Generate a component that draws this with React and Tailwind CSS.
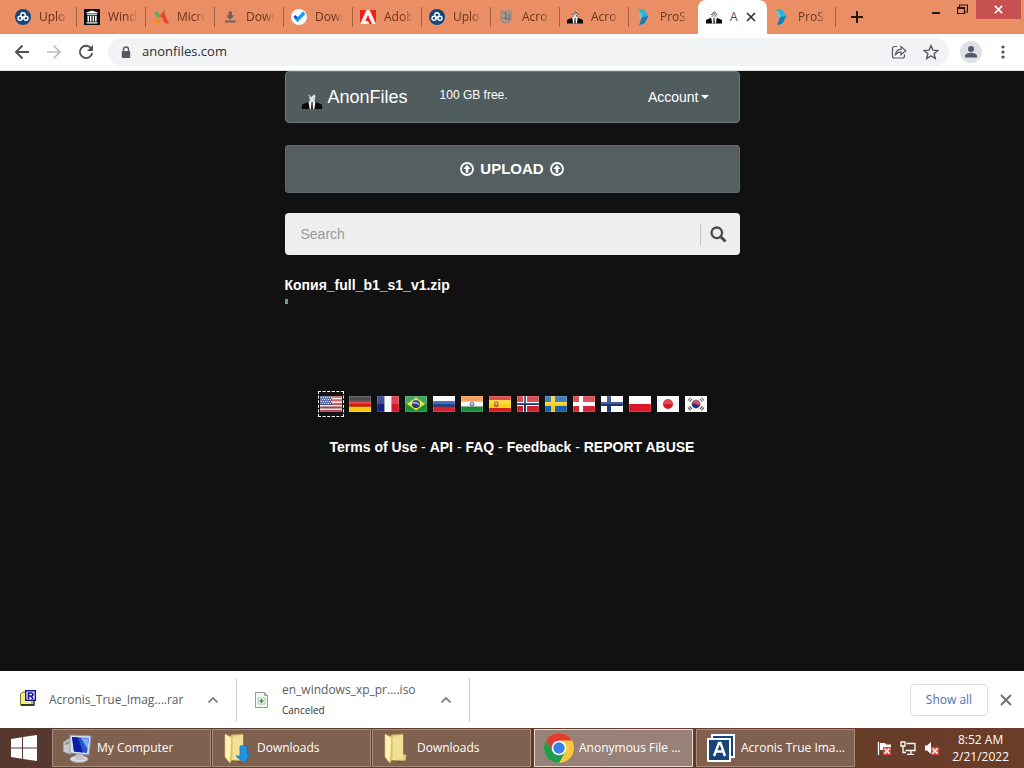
import React from "react";

const UI = "font-['Open_Sans','Noto_Sans',sans-serif]";
const ARIAL = "font-['Liberation_Sans',Arial,sans-serif]";

/* ---------- favicons ---------- */

function SuitIcon({ className = "size-4", light = false }) {
  return (
    <svg viewBox="0 0 20 16" className={className} aria-hidden="true">
      <path d="M0 16v-4.2L6.2 9 10 12l3.6-3 6.4 2.800V16z" fill="#080808" />
      <path d="M6.600 9 8.200 7.400h3.600L13.400 9 12.400 16H7.600z" fill="#f4f6f6" />
      <path d="M9.500 8.500h1.100l.5 7.500H8.900z" fill="#2a2a2a" />
      {light ? (
        <>
          <path d="m7 3.500 2 .8 3-3 1.500 2-.6 3.500-1.700 1.600H9.200L7.600 6.600z" fill="#cdd6d6" />
          <path d="m6.600 1.800 2 2M9 5.600l4-3.200M8.600 7.500l3.800-.4" fill="none" stroke="#fff" />
          <path d="m9.500 3.500 1.200-1.600" stroke="#667172" />
        </>
      ) : (
        <>
          <path d="m7 5 3-3.200L13.300 5l-.8 2.500-1.700 1H9.200L7.600 7.500z" fill="#ece2da" />
          <path d="M6.200 5.200 8 4.400l2.500-3L13 4.200l1 1.200M7.500 7.600l1-1.600m4 1.600-.6-2M9.500 4.800l1.800-.8" fill="none" stroke="#262626" />
        </>
      )}
    </svg>
  );
}

function CloudIcon() {
  return (
    <svg viewBox="0 0 16 16" className="size-4" aria-hidden="true">
      <circle cx="8" cy="8" r="8" fill="#15467c" />
      <g fill="none" stroke="#fff" strokeWidth="1.400">
        <circle cx="8" cy="6" r="2.200" />
        <circle cx="5" cy="9.300" r="2" />
        <circle cx="11" cy="9.300" r="2" />
        <path d="m6.700 10.300 2.800-2.700" />
      </g>
    </svg>
  );
}

function ArchiveIcon() {
  return (
    <svg viewBox="0 0 16 16" className="size-4" aria-hidden="true">
      <path d="M0 0h16v16H0z" fill="#080808" />
      <path d="m8 1.5 5.5 2v1H2.5v-1zM3 5.3h10v1H3zM3.5 7h1.6v5.5H3.5zm2.5 0h1.5v5.5H6zm2.6 0h1.5v5.5H8.600zm2.400 0h1.600v5.500H11zM2.500 13.200h11v1.200h-11z" fill="#fff" />
    </svg>
  );
}

function TriangleIcon() {
  return (
    <svg viewBox="0 0 16 16" className="size-4" aria-hidden="true">
      <path d="M1 3.500 4 2l4 5-3 3z" fill="#5fae57" />
      <path d="M5 9 11 1l2 2-5 7z" fill="#9a9a52" />
      <path d="M0 14 3 9l6 3-3 2z" fill="#f08a24" />
      <path d="m7 7 4-5 2 6 3 7-4-1z" fill="#f0452c" />
      <path d="m5 9 3-1 2 2-2 2z" fill="#ea8f65" />
    </svg>
  );
}

function DownloadIcon() {
  return (
    <svg viewBox="0 0 16 16" className="size-4" aria-hidden="true">
      <path d="M6.500 2.500h3.400v4h2.600L8.200 10.800 4 6.500h2.500zM3 11.500h10.500V13.500H3z" fill="#686461" />
    </svg>
  );
}

function CheckIcon() {
  return (
    <svg viewBox="0 0 16 16" className="size-4" aria-hidden="true">
      <circle cx="8" cy="8" r="8" fill="#f4faff" />
      <path d="m2.500 8 2-2 4 4-2.200 2.500z" fill="#1545d0" />
      <path d="m5.500 9.500 6.500-7 2.500 2.500-8 8-2-2z" fill="#169be9" />
    </svg>
  );
}

function AdobeIcon() {
  return (
    <svg viewBox="0 0 16 16" className="size-4" aria-hidden="true">
      <path d="M0 1h16v14H0z" fill="#fff2eb" />
      <path d="M0 1h6.300L0 15zm9.700 0H16v14zM8 6l4 9H9.300l-1.200-3H5.300z" fill="#ee2019" />
    </svg>
  );
}

function ShieldIcon() {
  return (
    <svg viewBox="0 0 16 16" className="size-4" aria-hidden="true">
      <path d="M3 2h10v8.500L9.500 14H6l-3-3z" fill="#b59a88" stroke="#918983" strokeWidth="1.200" />
      <path d="M5 4h3v5H5m6-5v6H7" fill="none" stroke="#6a757c" strokeWidth="1.300" />
    </svg>
  );
}

function ArrowTabIcon() {
  return (
    <svg viewBox="0 0 16 16" className="size-4" aria-hidden="true">
      <path d="M2 0h4q2 0 3 2l3.500 5L9 9 6 7z" fill="#2bb3dc" />
      <path d="M12.500 7 9 13.500Q8 15 6 15.500L3 16l3-8z" fill="#1280b8" />
      <path d="m2 0 5 7-2 3z" fill="#58c8e2" />
    </svg>
  );
}

const TABS = [
  { title: "Uplo", icon: <CloudIcon /> },
  { title: "Wind", icon: <ArchiveIcon /> },
  { title: "Micro", icon: <TriangleIcon /> },
  { title: "Down", icon: <DownloadIcon /> },
  { title: "Down", icon: <CheckIcon /> },
  { title: "Adob", icon: <AdobeIcon /> },
  { title: "Uplo", icon: <CloudIcon /> },
  { title: "Acro", icon: <ShieldIcon /> },
  { title: "Acro", icon: <SuitIcon /> },
  { title: "ProS", icon: <ArrowTabIcon />, noLine: true },
  { title: "A", icon: <SuitIcon />, active: true },
  { title: "ProS", icon: <ArrowTabIcon /> },
];

function Tab({ tab }) {
  if (tab.active) {
    return (
      <div className="flex h-full w-[69px] shrink-0 items-center rounded-t-lg bg-white pl-2">
        <button className="flex items-center gap-2 text-[#45494d]">
          {tab.icon}
          <span className="w-4 text-left">{tab.title}</span>
        </button>
        <button aria-label="Close tab">
          <svg viewBox="0 0 10 10" className="size-[10px]">
            <path d="m1 1 8 8m0-8L1 9" stroke="#333" strokeWidth="1.700" />
          </svg>
        </button>
      </div>
    );
  }
  return (
    <button className="flex h-full w-[69px] shrink-0 items-center pl-[7px] text-[#6b321a]">
      {tab.icon}
      <span className="ml-2 min-w-0 flex-1 overflow-hidden whitespace-nowrap text-left [mask-image:linear-gradient(to_right,#000_65%,transparent)]">
        {tab.title}
      </span>
      <span className={tab.noLine ? "ml-2 w-px" : "ml-2 h-5 w-px bg-[#a5603f]"} />
    </button>
  );
}

function TabStrip() {
  return (
    <div className="flex h-[34px] items-start bg-[#ea8f65] text-xs">
      <div className="flex h-full min-w-0 items-center pl-2">
        {TABS.map((t, i) => (
          <Tab key={i} tab={t} />
        ))}
        <button aria-label="New tab" className="ml-[14px]">
          <svg viewBox="0 0 14 14" className="size-[14px]">
            <path d="M7 1v12M1 7h12" stroke="#28180f" strokeWidth="2" />
          </svg>
        </button>
      </div>
      <div className="ml-auto flex h-[19px] shrink-0 items-center pr-[3px]">
        <button aria-label="Minimize" className="flex w-6 justify-center">
          <svg viewBox="0 0 10 10" className="size-[10px]">
            <path d="M1 8h8" stroke="#27160e" strokeWidth="2" />
          </svg>
        </button>
        <button aria-label="Restore" className="flex w-7 justify-center">
          <svg viewBox="0 0 11 11" className="size-[11px]" fill="none" stroke="#27160e">
            <path d="M.5 3.500h7v6h-7zM.5 4.500h7M2.500 3V1h8v7H8" strokeWidth="1.200" />
          </svg>
        </button>
        <button aria-label="Close" className="flex h-[19px] w-[45px] items-center justify-center bg-[#c75050]">
          <svg viewBox="0 0 10 10" className="size-[9px]">
            <path d="m1 1 8 8m0-8L1 9" stroke="#fff" strokeWidth="1.800" />
          </svg>
        </button>
      </div>
    </div>
  );
}

function Toolbar() {
  return (
    <div className="flex h-[37px] items-center border-b border-[#d9dfe2] bg-white pl-[14px] pr-3">
      <button aria-label="Back">
        <svg viewBox="0 0 16 16" className="size-4" fill="none" stroke="#4e5256" strokeWidth="1.900">
          <path d="M15 8H2m6.500-6.500L2 8l6.500 6.500" />
        </svg>
      </button>
      <button aria-label="Forward" className="ml-4">
        <svg viewBox="0 0 16 16" className="size-4" fill="none" stroke="#b9bbbd" strokeWidth="1.700">
          <path d="M1 8h13M7.500 1.500 14 8l-6.500 6.500" />
        </svg>
      </button>
      <button aria-label="Reload" className="ml-4">
        <svg viewBox="0 0 16 16" className="size-4" fill="none" stroke="#4e5256" strokeWidth="1.900">
          <path d="M13.300 4.500A6.200 6.200 0 1 0 14.200 9" />
          <path d="M15 1v6H9z" fill="#4e5256" stroke="none" />
        </svg>
      </button>
      <div className="ml-[14px] flex h-7 min-w-0 flex-1 items-center rounded-full bg-[#f1f3f4] pl-[13px] pr-[10px]">
        <svg viewBox="0 0 10 14" className="h-[13px] w-[10px] shrink-0" aria-hidden="true">
          <path d="M2.300 6V3.800a2.700 2.700 0 0 1 5.400 0V6" fill="none" stroke="#55585c" strokeWidth="1.400" />
          <rect x=".5" y="5.300" width="9" height="7.700" rx="1" fill="#55585c" />
        </svg>
        <input
          aria-label="Address"
          defaultValue="anonfiles.com"
          className="ml-[11px] min-w-0 flex-1 bg-transparent text-[13px] text-[#2c2f33] outline-none"
        />
        <button aria-label="Share">
          <svg viewBox="0 0 16 16" className="size-4" fill="none" stroke="#55595d" strokeWidth="1.200">
            <path d="M6 2.500H3.500a2 2 0 0 0-2 2v7.500a2 2 0 0 0 2 2h8a2 2 0 0 0 2-2v-1.500" />
            <path d="M4.500 10.500c.4-4 2.500-5.200 5.500-5.200V2.500l4.800 4.200L10 10.800V8.200c-2.500 0-4 .7-5.500 2.300z" />
          </svg>
        </button>
        <button aria-label="Bookmark" className="ml-4">
          <svg viewBox="0 0 16 16" className="size-4" fill="none" stroke="#55595d" strokeWidth="1.400">
            <path d="m8 1.500 1.900 4.600 5 .4-3.800 3.200 1.200 4.800L8 11.900l-4.300 2.600 1.200-4.800L1.100 6.500l5-.4z" />
          </svg>
        </button>
      </div>
      <button aria-label="Profile" className="ml-[11px] flex size-[22px] items-center justify-center rounded-full bg-[#dee1e6]">
        <svg viewBox="0 0 14 14" className="size-[14px]" fill="#515a68">
          <circle cx="7" cy="4" r="3" />
          <path d="M1 12.500V11c0-2.200 4-3.200 6-3.200s6 1 6 3.200v1.500z" />
        </svg>
      </button>
      <button aria-label="Menu" className="ml-3 flex w-[18px] justify-center">
        <svg viewBox="0 0 4 14" className="h-[14px] w-1" fill="#4a4e52">
          <circle cx="2" cy="2" r="1.600" />
          <circle cx="2" cy="7" r="1.600" />
          <circle cx="2" cy="12" r="1.600" />
        </svg>
      </button>
    </div>
  );
}

/* ---------- page ---------- */

function UploadGlyph() {
  return (
    <svg viewBox="0 0 14 14" className="size-[14px]" aria-hidden="true">
      <circle cx="7" cy="7" r="6" fill="none" stroke="#fff" strokeWidth="1.800" />
      <path d="m7 2.800 3.700 4.200H8.300v3.700H5.700V7H3.300z" fill="#fff" />
    </svg>
  );
}

function Cross({ bg, cross, inner }) {
  return (
    <>
      <path d="M0 0h22v16H0z" fill={bg} />
      <path d="M6 0h4v6h12v4H10v6H6v-6H0V6h6z" fill={cross} />
      {inner && <path d="M7 0h2v7h13v2H9v7H7V9H0V7h7z" fill={inner} />}
    </>
  );
}

function HStripes({ colors }) {
  return colors.map((c, i) => (
    <rect key={i} x="0" y={(16 / colors.length) * i} width="22" height={16 / colors.length + 0.1} fill={c} />
  ));
}

const FLAGS = [
  ["English", <>
    <HStripes colors={["#c8393f", "#f3eeee", "#c8393f", "#f3eeee", "#c8393f", "#f3eeee", "#c8393f", "#f3eeee", "#c8393f"]} />
    <path d="M0 0h12v9H0z" fill="#38478d" />
    <path d="M1 1.500h11M2 3.500h10M1 5.500h11M2 7.500h10" stroke="#d5d9ea" strokeWidth="1" strokeDasharray="1 1" />
  </>],
  ["Deutsch", <HStripes colors={["#232323", "#d51418", "#f7c90a"]} />],
  ["Français", <>
    <path d="M0 0h7.400v16H0z" fill="#14217f" />
    <path d="M7.400 0h7.300v16H7.400z" fill="#f6f6f6" />
    <path d="M14.700 0H22v16h-7.300z" fill="#d3182c" />
  </>],
  ["Português", <>
    <path d="M0 0h22v16H0z" fill="#16903b" />
    <path d="m11 1.500 9 6.500-9 6.500L2 8z" fill="#f2dc24" />
    <circle cx="11" cy="8" r="4" fill="#173a7e" />
    <path d="M7.400 7c2.600-.5 5.200.3 7 2.200" stroke="#dfe9ee" fill="none" />
  </>],
  ["Русский", <HStripes colors={["#f8f8f8", "#1746a0", "#d2222c"]} />],
  ["हिन्दी", <>
    <HStripes colors={["#ef8c35", "#f8f8f8", "#198a3c"]} />
    <circle cx="11" cy="8" r="2" fill="#a9bcd6" stroke="#5273a2" />
  </>],
  ["Español", <>
    <path d="M0 0h22v16H0z" fill="#d3201f" />
    <path d="M0 4h22v8H0z" fill="#f7cf1a" />
    <path d="M5 5.500h4.500V10l-2.200 1.500L5 10z" fill="#b66a25" />
    <path d="M6.500 7h1.500v2H6.500z" fill="#dfb2a0" />
  </>],
  ["Norsk", <Cross bg="#d0202e" cross="#fff" inner="#19336f" />],
  ["Svenska", <Cross bg="#1560a8" cross="#f8cc1b" />],
  ["Dansk", <Cross bg="#d42536" cross="#fff" />],
  ["Suomi", <Cross bg="#fafafa" cross="#1d3579" />],
  ["Polski", <HStripes colors={["#fafafa", "#dc1728"]} />],
  ["日本語", <>
    <path d="M0 0h22v16H0z" fill="#fafafa" />
    <circle cx="11" cy="8" r="5" fill="#da1726" />
  </>],
  ["한국어", <>
    <path d="M0 0h22v16H0z" fill="#fafafa" />
    <circle cx="11" cy="8" r="4.300" fill="#193b83" />
    <path d="M6.900 7A4.300 4.300 0 0 1 15.200 9c-1.500 1.400-3.200.8-4.200-.8S8 6 6.900 7z" fill="#d32636" />
    <path d="m3 4.500 2.500-2.800M4.500 5.700 7 3m9.500-1.300L19 4.500M15 3l2.500 2.700M3 11.500l2.500 2.800M4.500 10.300 7 13m9.500 1.300 2.500-2.800M15 13l2.500-2.700" stroke="#3c3c3c" strokeWidth="1.100" />
  </>],
];

function Flag({ name, selected, children }) {
  return (
    <button
      aria-label={name}
      className={
        selected
          ? "-mr-px flex size-[26px] shrink-0 items-center justify-center border border-dashed border-white"
          : "flex h-[26px] w-[22px] shrink-0 items-center justify-center"
      }
    >
      <svg viewBox="0 0 22 16" className="h-4 w-[22px]" aria-hidden="true">
        {children}
        <path d="M0 0h22v8H0z" fill="#fff" opacity=".2" />
        <path d="M.5 .5h21v15H.5z" fill="none" stroke="#fff" opacity=".15" />
      </svg>
    </button>
  );
}

const LINKS = ["Terms of Use", "API", "FAQ", "Feedback", "REPORT ABUSE"];

function Page() {
  return (
    <main className={`${ARIAL} flex-1 bg-[#111111] text-white`}>
      <div className="mx-auto w-full max-w-[455px]">
        <nav className="flex h-[52px] items-center rounded border border-[#6c7778] bg-[#515c5e] pl-4 pr-[30px]">
          <a href="#home" className="flex items-center gap-[6px] text-lg leading-6">
            <SuitIcon light className="mt-2 h-4 w-5" />
            AnonFiles
          </a>
          <span className="mb-1 ml-8 text-xs">100 GB free.</span>
          <button className="ml-auto flex items-center gap-[2px] text-sm">
            Account
            <svg viewBox="0 0 8 4" className="h-1 w-2" aria-hidden="true">
              <path d="M0 0h8L4 4z" fill="#fff" />
            </svg>
          </button>
        </nav>

        <button className="mt-[22px] flex h-12 w-full items-center justify-center gap-[6px] rounded-[3px] border border-[#606c6e] bg-[#555f62] text-[15px] font-bold">
          <UploadGlyph />
          UPLOAD
          <UploadGlyph />
        </button>

        <form className="mt-5 flex h-[42px] items-center rounded bg-[#eeeeee]" onSubmit={(e) => e.preventDefault()}>
          <input
            aria-label="Search"
            placeholder="Search"
            className="h-full min-w-0 flex-1 bg-transparent px-4 text-sm text-[#333] outline-none placeholder:text-[#999]"
          />
          <button aria-label="Submit search" className="flex h-[21px] w-10 items-center justify-center border-l border-[#c4c4c4] pr-1">
            <svg viewBox="0 0 17 17" className="size-[17px]" fill="none" stroke="#4a4a4a">
              <circle cx="6.800" cy="6.800" r="5.300" strokeWidth="2.300" />
              <path d="m10.500 10.500 5 5" strokeWidth="3" />
            </svg>
          </button>
        </form>

        <p className="mt-5 text-sm font-bold leading-5">Копия_full_b1_s1_v1.zip</p>
        <div role="progressbar" aria-label="Upload progress" aria-valuenow={1} className="mt-1 h-[5px]">
          <div className="h-full w-[3px] bg-[#62a876]" />
        </div>

        <div className="mt-[87px] flex justify-center gap-[6px]">
          {FLAGS.map(([name, art], i) => (
            <Flag key={name} name={name} selected={i === 0}>
              {art}
            </Flag>
          ))}
        </div>

        <p className="mt-5 text-center text-sm leading-5">
          {LINKS.map((l, i) => (
            <React.Fragment key={l}>
              {i > 0 && " - "}
              <a href="#page" className="font-bold">{l}</a>
            </React.Fragment>
          ))}
        </p>
      </div>
    </main>
  );
}

/* ---------- download shelf ---------- */

function Chevron() {
  return (
    <svg viewBox="0 0 12 8" className="h-2 w-3" fill="none" stroke="#74777a" strokeWidth="1.700" aria-hidden="true">
      <path d="m1.500 6.500 4.500-4.500 4.500 4.500" />
    </svg>
  );
}

function Shelf() {
  return (
    <div className="flex h-[57px] items-center bg-white text-xs text-[#5a5d61]">
      <div className="flex h-11 w-[237px] items-center border-r border-[#cfcfcf] pl-5 pr-[17px]">
        <svg viewBox="0 0 16 16" className="mb-1 size-4" aria-hidden="true">
          <path d="M.5 4 3 2h9v13H.5z" fill="#f4ef83" stroke="#787421" />
          <path d="M1 15h13V5" fill="none" stroke="#111" strokeWidth="1.300" />
          <path d="M5.700.7h9.600v9.600H5.700z" fill="#fff" stroke="#10109a" strokeWidth="1.400" />
          <path d="M8.500 9V3h3q1.500.2 1.500 1.500T11.500 6h-3M11 6l2 3" fill="none" stroke="#10109a" strokeWidth="1.700" />
        </svg>
        <button className="ml-[13px] whitespace-nowrap">Acronis_True_Imag....rar</button>
        <button aria-label="Options for rar file" className="ml-auto"><Chevron /></button>
      </div>
      <div className="flex h-11 w-[233px] items-center border-r border-[#cfcfcf] pl-[18px] pr-[17px]">
        <svg viewBox="0 0 13 16" className="h-4 w-[13px]" aria-hidden="true">
          <path d="M.5.500h9l3 3v12H.5z" fill="#f4f8f4" stroke="#959d95" />
          <path d="M9.500.5v3h3" fill="none" stroke="#959d95" />
          <path d="M3 6h7v6H3z" fill="none" stroke="#a6cda7" />
          <path d="M6.500 7v4m-2-2h4" stroke="#447d49" strokeWidth="1.300" />
        </svg>
        <button className="ml-[14px] whitespace-nowrap text-left">
          <span className="block leading-5">en_windows_xp_pr....iso</span>
          <span className="block text-[10px] leading-5 text-[#303236]">Canceled</span>
        </button>
        <button aria-label="Options for iso file" className="ml-auto"><Chevron /></button>
      </div>
      <button className="ml-auto mr-3 h-8 w-[78px] rounded border border-[#dadce0] text-xs font-medium text-[#4a6fb5]">Show all</button>
      <button aria-label="Close downloads bar" className="mr-3">
        <svg viewBox="0 0 12 12" className="size-3">
          <path d="m1 1 10 10m0-10L1 11" stroke="#696c70" strokeWidth="1.800" />
        </svg>
      </button>
    </div>
  );
}

/* ---------- taskbar ---------- */

function ComputerIcon() {
  return (
    <svg viewBox="0 0 32 32" className="size-8" aria-hidden="true">
      <path d="m2 10 8-5v18l-8-3z" fill="#c5cbc9" stroke="#777" />
      <path d="m4 11 4-2v3l-4 1z" fill="#7ba382" />
      <ellipse cx="18" cy="27" rx="9" ry="3.500" fill="#dadada" stroke="#a8a29c" />
      <path d="M15 22h7l2 6h-9z" fill="#c6c6c6" />
      <path d="m9 3 21 1-2 19-19-2z" fill="#d9e2ec" stroke="#8c98b0" />
      <path d="m11 5 17 1-2 15-13-1.500z" fill="#2755cf" />
      <path d="m11 5 6 .5 5 15-9-1z" fill="#0b1fa5" />
      <path d="m20 6 8 .5L26.500 17z" fill="#81aaf2" />
    </svg>
  );
}

function FolderIcon({ arrow }) {
  return (
    <svg viewBox="0 0 32 32" className="size-8" aria-hidden="true">
      <path d="m14 27 10-2 3 2-8 4z" fill="#3d271e" opacity=".4" />
      <path d="m10 3 12-1v20l3 1v5l-3 1-12-1z" fill="#e6cf78" stroke="#bfa251" strokeWidth=".7" />
      <path d="m12 5 10-2v24l-11 1z" fill="#f0e196" />
      <path d="m4 2 6 3 1 6v15l-2 5-5-6z" fill="#fff3b5" stroke="#d4bc6c" strokeWidth=".7" />
      <path d="m10 6 1 5v15l-2 5z" fill="#dcc36a" />
      {arrow && <path d="M19 14q4-1 7 0v8h4l-7 9-8-7h4z" fill="#2294df" stroke="#1767a8" strokeWidth=".7" />}
    </svg>
  );
}

function ChromeIcon() {
  return (
    <svg viewBox="0 0 32 32" className="size-8" aria-hidden="true">
      <circle cx="16" cy="16" r="15" fill="#f7cb3a" />
      <path d="M3 8.500A15 15 0 0 1 29 8.500H16L9.500 19.500z" fill="#e23c30" />
      <path d="M3 8.500A15 15 0 0 0 16 31l6.500-11.500-13-.2z" fill="#219a52" />
      <circle cx="16" cy="16" r="7.300" fill="#fff" />
      <circle cx="16" cy="16" r="5.700" fill="#397fea" />
    </svg>
  );
}

function AcronisIcon() {
  return (
    <svg viewBox="0 0 32 32" className="size-8" aria-hidden="true">
      <path d="M7 3h22v22H7z" fill="#174378" stroke="#fff" strokeWidth="2" />
      <path d="M3 7h22v22H3z" fill="#174378" stroke="#fff" strokeWidth="2" />
      <path d="m9 24 5-13h1.500L20 24m-9-4.500h7.500" fill="none" stroke="#fff" strokeWidth="2.400" />
    </svg>
  );
}

const TASKS = [
  { name: "My Computer", icon: <ComputerIcon />, gap: "mr-px" },
  { name: "Downloads", icon: <FolderIcon arrow />, gap: "mr-px" },
  { name: "Downloads", icon: <FolderIcon />, gap: "mr-[3px]" },
  { name: "Anonymous File ...", icon: <ChromeIcon />, gap: "mr-[3px]", active: true },
  { name: "Acronis True Ima...", icon: <AcronisIcon />, gap: "" },
];

function Taskbar() {
  return (
    <div className="flex h-10 items-stretch bg-linear-to-r from-[#56382f] to-[#6a3d27] text-xs text-white">
      <button aria-label="Start" className="flex w-[52px] shrink-0 items-center pl-[11px]">
        <svg viewBox="0 0 26 26" className="size-[26px]" fill="#fff">
          <path d="m0 4 11-1.700v10.200H0zM12 2.100 26 0v12.500H12zM0 13.500h11v10.200L0 22zM12 13.500h14V26l-14-2.100z" />
        </svg>
      </button>
      {TASKS.map((t, i) => (
        <button
          key={i}
          className={`${t.gap} ${
            t.active ? "border-[#e8d7c8] bg-[#988178]" : "border-[#a98e7c] bg-[#80604f]"
          } my-px flex min-w-0 max-w-[159px] flex-1 items-center gap-1 border pl-2`}
        >
          <span className="shrink-0">{t.icon}</span>
          <span className="overflow-hidden whitespace-nowrap">{t.name}</span>
        </button>
      ))}
      <div className="ml-auto flex shrink-0 items-center gap-2 pr-[15px]">
        <button aria-label="Action Center">
          <svg viewBox="0 0 16 16" className="size-4">
            <path d="M2.500 2v13" stroke="#fff" strokeWidth="1.300" />
            <path d="M4 3h5l1 1.500h5V10H4z" fill="#fff" />
            <path d="M7 7h8v8H7z" fill="#d74b49" />
            <path d="m8.500 8.500 5 5m0-5-5 5" stroke="#fff" strokeWidth="1.500" />
          </svg>
        </button>
        <button aria-label="Network">
          <svg viewBox="0 0 16 16" className="size-4" fill="none" stroke="#fff" strokeWidth="1.300">
            <path d="M6.500 3.500H15v7H5.500M11 10.500V14M7 14.300h7M1 2h4v4H1zM3 6v6.500h3" />
          </svg>
        </button>
        <button aria-label="Volume muted">
          <svg viewBox="0 0 16 16" className="size-4">
            <path d="M1 5.500h2L7 2v12l-4-3.500H1z" fill="#fff" />
            <path d="M7 7h8v8H7z" fill="#d74b49" />
            <path d="m8.500 8.500 5 5m0-5-5 5" stroke="#fff" strokeWidth="1.500" />
          </svg>
        </button>
        <div className="ml-1 text-center leading-[17px]">
          <div>8:52 AM</div>
          <div>2/21/2022</div>
        </div>
      </div>
    </div>
  );
}

export default function App() {
  return (
    <div className={`${UI} flex min-h-screen flex-col`}>
      <TabStrip />
      <Toolbar />
      <Page />
      <Shelf />
      <Taskbar />
    </div>
  );
}
